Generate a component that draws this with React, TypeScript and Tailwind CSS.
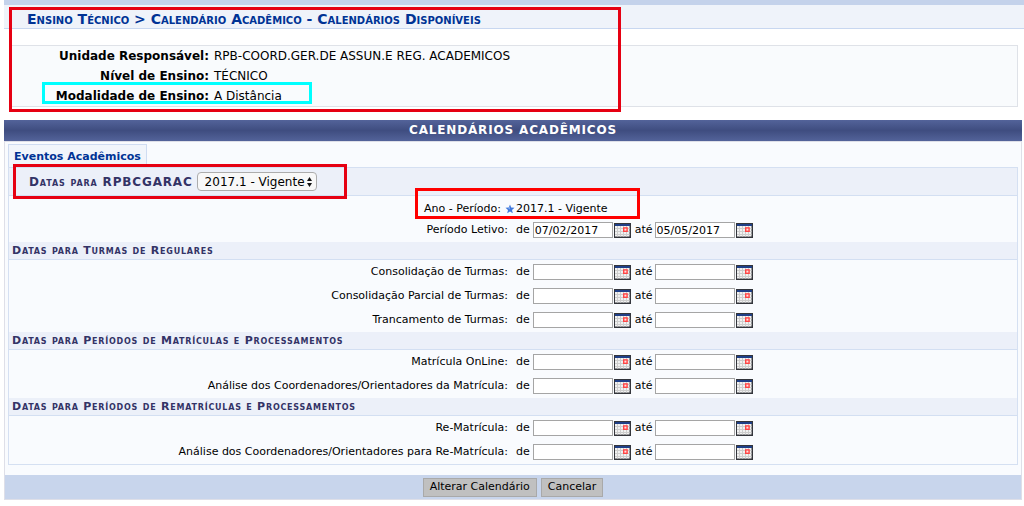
import React, { ReactNode } from 'react';

interface DateRow {
  id: string;
  label: string;
  from?: string;
  to?: string;
}

const periodo: DateRow = { id: 'periodo', label: 'Período Letivo:', from: '07/02/2017', to: '05/05/2017' };

const sections: { title: string; rows: DateRow[] }[] = [
  {
    title: 'Datas para Turmas de Regulares',
    rows: [
      { id: 'consolidacao', label: 'Consolidação de Turmas:' },
      { id: 'parcial', label: 'Consolidação Parcial de Turmas:' },
      { id: 'trancamento', label: 'Trancamento de Turmas:' },
    ],
  },
  {
    title: 'Datas para Períodos de Matrículas e Processamentos',
    rows: [
      { id: 'matricula', label: 'Matrícula OnLine:' },
      { id: 'analise', label: 'Análise dos Coordenadores/Orientadores da Matrícula:' },
    ],
  },
  {
    title: 'Datas para Períodos de Rematrículas e Processamentos',
    rows: [
      { id: 'rematricula', label: 'Re-Matrícula:' },
      { id: 'analise-re', label: 'Análise dos Coordenadores/Orientadores para Re-Matrícula:' },
    ],
  },
];

const info = [
  { label: 'Unidade Responsável:', value: 'RPB-COORD.GER.DE ASSUN.E REG. ACADEMICOS' },
  { label: 'Nível de Ensino:', value: 'TÉCNICO' },
  { label: 'Modalidade de Ensino:', value: 'A Distância' },
];

const CalendarIcon = () => (
  <svg width="17" height="15" viewBox="0 0 17 15">
    <rect width="17" height="15" fill="#34363c" />
    <rect x="1" y="3" width="14.5" height="10.5" fill="#f1f1f1" />
    <rect x="1" y="1" width="15" height="2" fill="#1f3f87" />
    <path d="M3.5 3v10.5M6.5 3v10.5M9.5 3v10.5M12.5 3v10.5M1 5.5h14.5M1 8.5h14.5M1 11.5h14.5" stroke="#cdcdcd" />
    <rect x="9.7" y="4.9" width="3.4" height="3.4" fill="#ffe0e0" stroke="#ff4545" strokeWidth="1.4" />
  </svg>
);

const StarIcon = () => (
  <svg width="10" height="10" viewBox="0 0 10 10">
    <path d="M5 .6 6.2 3.6 9.5 3.8 7 5.9 7.8 9.2 5 7.4 2.2 9.2 3 5.9.5 3.8 3.8 3.6Z" fill="#3f78dc" />
    <path d="M3.4 4.4 4.8 2.6 4.6 5.6Z" fill="#9cc0f5" />
  </svg>
);

const DateField = ({ id, label, value = '' }: { id: string; label: string; value?: string }) => (
  <input
    id={id}
    type="text"
    aria-label={label}
    defaultValue={value}
    className="h-4 w-20 border border-[#a5a5a5] bg-white px-px text-[11px] leading-3 text-black outline-none"
  />
);

const DateLine = ({ row }: { row: DateRow }) => (
  <div className="grid h-6 grid-cols-2 items-center pl-1.5">
    <label htmlFor={`${row.id}-de`} className="pr-2 text-right">{row.label}</label>
    <div className="flex items-center">
      <label htmlFor={`${row.id}-de`} className="mr-[3px]">de</label>
      <DateField id={`${row.id}-de`} label={`${row.label} de`} value={row.from} />
      <button type="button" aria-label="Abrir calendário" className="mr-1 ml-px"><CalendarIcon /></button>
      <label htmlFor={`${row.id}-ate`} className="mr-0.5">até</label>
      <DateField id={`${row.id}-ate`} label={`${row.label} até`} value={row.to} />
      <button type="button" aria-label="Abrir calendário" className="ml-px"><CalendarIcon /></button>
    </div>
  </div>
);

const SectionTitle = ({ children }: { children: ReactNode }) => (
  <h3 className="h-[18px] border-b border-[#d3dff2] bg-[#ecf0f9] pl-[3px] text-[11px] leading-[18px] font-bold tracking-[0.07em] text-[#333366] [font-variant:small-caps]">
    {children}
  </h3>
);

const FormButton = ({ children }: { children: ReactNode }) => (
  <button type="button" className="h-[19px] border border-[#a9a9a9] bg-[#c0c0c0] px-1.5 text-[11px] leading-4 text-black">
    {children}
  </button>
);

const App = () => {
  return (
    <div className="min-h-screen bg-white pl-1 font-['DejaVu_Sans',sans-serif] text-[11px] text-black">
      <header className="relative pb-[13px]">
        <div className="h-[5px] bg-[#c4d2eb]" />
        <h1 className="h-6 border-b border-[#c8d7f0] bg-[#eff3fa] pl-[23px] text-[14px] leading-[28px] font-bold text-[#003395] [font-variant:small-caps]">
          Ensino Técnico &gt; Calendário Acadêmico - Calendários Disponíveis
        </h1>
        <dl className="mt-4 mr-1.5 ml-1.5 border border-[#dfe2e8] bg-[#f9fbfd] text-[12px] leading-5">
          {info.map((item) => (
            <div key={item.label} className="flex">
              <dt className="w-[198px] shrink-0 text-right font-bold">{item.label}</dt>
              <dd className="pl-[5px]">{item.value}</dd>
            </div>
          ))}
        </dl>
        <div className="pointer-events-none absolute top-[7px] left-[5px] h-[105px] w-[612px] border-3 border-[#e60012]" />
        <div className="pointer-events-none absolute top-[82px] left-[38px] h-[22px] w-[270px] border-3 border-[#00ffff]" />
      </header>

      <main className="mr-0.5">
        <h2 className="h-[21px] bg-linear-to-b from-[#53639a] via-[#3f4d80] to-[#53639a] text-center text-[12px] leading-[21px] font-bold tracking-[0.07em] text-white">
          CALENDÁRIOS ACADÊMICOS
        </h2>
        <form className="border border-[#dedfe8] bg-[#f9fbfe]">
          <div className="mx-[3px] mt-0.5 mb-2.5">
            <div className="flex">
              <a href="#eventos" className="h-[23px] border border-b-0 border-[#cfdcf2] bg-[#f1f5fb] px-[5px] text-[11px] leading-6 font-bold text-[#003395]">
                Eventos Acadêmicos
              </a>
            </div>
            <div id="eventos" className="border border-[#d5e0f2]">
              <div className="relative flex h-7 items-center border-b border-[#d3dff2] bg-[#ecf0f9] pl-5">
                <label htmlFor="periodo-select" className="mr-1 text-[12px] font-bold tracking-[0.07em] text-[#333366] [font-variant:small-caps]">
                  Datas para RPBCGARAC
                </label>
                <div className="relative">
                  <select id="periodo-select" className="block h-[19px] w-[120px] appearance-none rounded-[4px] border border-[#acacac] bg-[#f8f8f8] pl-[7px] text-[12px] leading-4 text-black">
                    <option>2017.1 - Vigente</option>
                  </select>
                  <svg width="5" height="10" viewBox="0 0 5 10" className="pointer-events-none absolute top-[5px] right-[5px]">
                    <path d="M2.5 0 5 4H0ZM0 6h5L2.5 10Z" fill="#111" />
                  </svg>
                </div>
                <div className="pointer-events-none absolute -top-1 left-1 h-[35px] w-[334px] border-3 border-[#e60012]" />
              </div>

              <div className="relative grid h-[22px] grid-cols-2 items-center pt-1 pl-1.5">
                <div className="flex items-center justify-end gap-1 pr-px">
                  <span>Ano - Período:</span>
                  <StarIcon />
                </div>
                <span>2017.1 - Vigente</span>
                <div className="pointer-events-none absolute -top-2 left-[calc(50%-98px)] h-[31px] w-[225px] border-3 border-[#ff0000]" />
              </div>
              <DateLine row={periodo} />

              {sections.map((section) => (
                <section key={section.title}>
                  <SectionTitle>{section.title}</SectionTitle>
                  {section.rows.map((row) => (
                    <DateLine key={row.id} row={row} />
                  ))}
                </section>
              ))}
            </div>
          </div>
          <footer className="flex h-6 items-center justify-center gap-1 bg-[#c8d5ec]">
            <FormButton>Alterar Calendário</FormButton>
            <FormButton>Cancelar</FormButton>
          </footer>
        </form>
      </main>
    </div>
  );
};

export default App;
